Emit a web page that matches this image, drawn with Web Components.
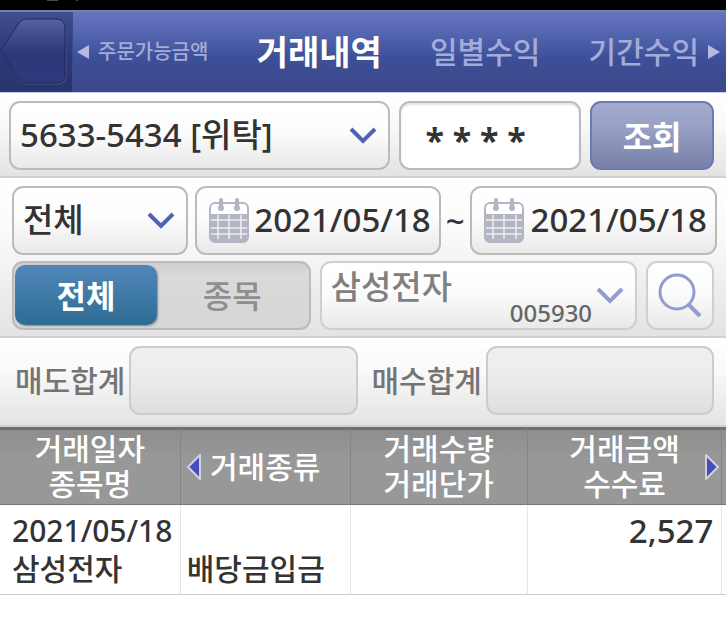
<!DOCTYPE html>
<html lang="ko">
<head>
<meta charset="utf-8">
<meta name="viewport" content="width=device-width, initial-scale=1">
<title>거래내역</title>
<style>
  body {
    margin: 0;
    background: #ffffff;
    color: #333333;
    font-family: "Noto Sans", "Noto Sans CJK KR", sans-serif;
    font-weight: 500;
  }
</style>
</head>
<body>
<ht-app></ht-app>

<script>
  // Shared by every control that sits in a rounded box
  const BOX = /* css */ `
    * {
      box-sizing: border-box;
    }

    .box {
      background: linear-gradient( #ffffff 0%, #fcfcfc 45%, #e9e9e9 100% );
      border: 2px solid #bbbbbb;
      border-radius: 11px;
      color: inherit;
      font: inherit;
      height: 69px;
      margin: 0;
      outline: none;
      width: 100%;
    }
  `;

  class HTElement extends HTMLElement {
    constructor() {
      super();

      const template = document.createElement( 'template' );
      template.innerHTML = this.constructor.markup;

      this.attachShadow( {mode: 'open'} );
      this.shadowRoot.appendChild( template.content.cloneNode( true ) );
    }
  }

  // Title bar with back button and tabs
  class HTHeader extends HTElement {
    static markup = /* template */ `
      <style>
        :host {
          background: linear-gradient( #6674bd 0%, #5263ae 30%, #3d4f98 58%, #3c4889 100% );
          border-bottom: 1px solid #c5cbe8;
          border-top: 2px solid #7680aa;
          box-sizing: border-box;
          display: flex;
          height: 83px;
        }

        button {
          background: none;
          border: 0;
          margin: 0;
          padding: 0;
        }

        .back {
          background: linear-gradient( #414f90 0%, #2c3976 55%, #29346d 100% );
          border-right: 1px solid #3d4988;
          flex: none;
          height: 80px;
          width: 73px;
        }

        svg {
          display: block;
        }

        nav {
          align-items: center;
          display: flex;
          flex: 1;
          gap: 8px;
          padding: 0 6px 0 4px;
        }

        .tabs {
          align-items: center;
          display: flex;
          flex: 1;
          justify-content: space-between;
        }

        a {
          color: #a3acd8;
          font-size: 30px;
          line-height: 40px;
          text-decoration: none;
          white-space: nowrap;
        }

        a.long {
          font-size: 20px;
        }

        a[aria-current] {
          color: #ffffff;
          font-size: 34px;
          font-weight: 700;
        }
      </style>
      <button class="back" type="button" aria-label="뒤로">
        <svg width="72" height="80" viewBox="0 0 72 80">
          <defs>
            <linearGradient id="face" x1="0" y1="0" x2="0" y2="1">
              <stop offset="0" stop-color="#5563a2"/>
              <stop offset=".25" stop-color="#3f4d8e"/>
              <stop offset=".55" stop-color="#2b3878"/>
              <stop offset="1" stop-color="#2d3a7d"/>
            </linearGradient>
          </defs>
          <path d="M2 39 L20 11 Q23 8 27 8 H57 Q66 8 66 17 V63 Q66 72 57 72 H27 Q23 72 20 69 Z" fill="none" stroke="#465390"/>
          <path d="M1 38 L19 11 Q22 7 26 7 H56 Q65 7 65 16 V62 Q65 71 56 71 H26 Q22 71 19 67 Z" fill="url(#face)" stroke="#1f2a58"/>
        </svg>
      </button>
      <nav>
        <svg width="13" height="14" viewBox="0 0 13 14"><path d="M0 7 L12 0 V14 Z" fill="#b4bbdf"/></svg>
        <div class="tabs">
          <a class="long" href="#order">주문가능금액</a>
          <a href="#history" aria-current="page">거래내역</a>
          <a href="#daily">일별수익</a>
          <a href="#period">기간수익</a>
        </div>
        <svg width="13" height="14" viewBox="0 0 13 14"><path d="M13 7 L1 0 V14 Z" fill="#b4bbdf"/></svg>
      </nav>
    `;
  }

  // Shaded band that holds controls
  class HTPanel extends HTElement {
    static markup = /* template */ `
      <style>
        :host {
          background: linear-gradient( #ffffff 0%, #fafafa 35%, #e3e3e3 100% );
          border-bottom: 2px solid #d2d2d2;
          box-sizing: border-box;
          display: grid;
          gap: 6px;
          padding: 8px 12px 6px;
        }
      </style>
      <slot></slot>
    `;
  }

  // Drop-down, with an optional code under the name
  class HTSelect extends HTElement {
    static markup = /* template */ `
      <style>
        ${BOX}

        :host {
          display: grid;
          min-width: 0;
        }

        .box, svg, span {
          grid-area: 1 / 1;
        }

        .box {
          appearance: none;
          font-size: 33px;
          padding: 0 48px 2px 9px;
        }

        svg {
          align-self: center;
          justify-self: end;
          margin-right: 13px;
          pointer-events: none;
        }

        path {
          fill: none;
          stroke: #5062b3;
          stroke-width: 4;
        }

        span {
          align-self: end;
          color: #666666;
          font-size: 24px;
          justify-self: end;
          line-height: 32px;
          margin: 0 45px 1px 0;
          pointer-events: none;
        }

        :host( [code] ) .box {
          border-color: #cfcfcf;
          color: #808080;
          padding-bottom: 18px;
        }

        :host( [code] ) path {
          stroke: #929ccd;
        }
      </style>
      <select class="box"><option></option></select>
      <svg width="28" height="18" viewBox="0 0 28 18"><path d="M2 2 L14 14 L26 2"/></svg>
      <span></span>
    `;

    // Setup
    connectedCallback() {
      this.$select = this.shadowRoot.querySelector( 'select' );
      this.$select.setAttribute( 'aria-label', this.getAttribute( 'label' ) );
      this.$select.options[0].text = this.getAttribute( 'value' );
      this.shadowRoot.querySelector( 'span' ).textContent = this.getAttribute( 'code' ) || '';
    }
  }

  // Account password
  class HTPassword extends HTElement {
    static markup = /* template */ `
      <style>
        ${BOX}

        :host {
          display: block;
          min-width: 0;
        }

        .box {
          background: #ffffff;
          box-shadow: inset 0 2px 2px #e4e4e4;
          font-size: 34px;
          font-weight: 700;
          padding: 8px 24px 0 24px;
        }
      </style>
      <input class="box" type="text" aria-label="비밀번호" autocomplete="off" value="* * * *">
    `;
  }

  class HTButton extends HTElement {
    static markup = /* template */ `
      <style>
        ${BOX}

        :host {
          display: block;
          min-width: 0;
        }

        .box {
          background: linear-gradient( #a3abd0 0%, #979fc6 40%, #7780a7 100% );
          border-color: #6d79b0;
          color: #ffffff;
          font-size: 32px;
          font-weight: 700;
          padding: 0 0 2px;
        }
      </style>
      <button class="box" type="button"><slot></slot></button>
    `;
  }

  // Date with calendar icon
  class HTDate extends HTElement {
    static markup = /* template */ `
      <style>
        ${BOX}

        :host {
          display: block;
          min-width: 0;
        }

        .box {
          align-items: center;
          display: flex;
          font-size: 33px;
          justify-content: space-between;
          padding: 0 8px 2px 12px;
        }

        svg {
          flex: none;
        }
      </style>
      <button class="box" type="button">
        <svg width="40" height="46" viewBox="0 0 40 46">
          <rect x="1" y="6" width="38" height="39" rx="5" fill="#ffffff" stroke="#b3b5c3" stroke-width="2"/>
          <path d="M1 17 H39 V40 Q39 45 34 45 H6 Q1 45 1 40 Z" fill="#b3b5c3"/>
          <path d="M2 23 H38 M2 31 H38 M2 37 H38 M9 18 V42 M20 18 V42 M32 18 V42" stroke="#eeeef2" stroke-width="1.5"/>
          <path d="M12 3 V10 M28 3 V10" stroke="#b3b5c3" stroke-width="4" stroke-linecap="round"/>
          <circle cx="12" cy="11" r="3" fill="#b3b5c3"/>
          <circle cx="28" cy="11" r="3" fill="#b3b5c3"/>
        </svg>
        <slot></slot>
      </button>
    `;
  }

  // All or single item
  class HTToggle extends HTElement {
    static markup = /* template */ `
      <style>
        ${BOX}

        :host {
          display: block;
          min-width: 0;
        }

        .box {
          background: linear-gradient( #cfcfcf 0%, #dadada 20%, #d6d6d6 100% );
          display: grid;
          grid-template-columns: 48fr 51fr;
          padding: 2px 1px 3px;
        }

        input {
          appearance: none;
          margin: 0;
          position: absolute;
        }

        label {
          border-radius: 10px;
          color: #8e8e8e;
          display: grid;
          font-size: 32px;
          padding-bottom: 2px;
          place-items: center;
        }

        label:has( :checked ) {
          background: linear-gradient( #5086b7 0%, #417ba9 45%, #306b92 100% );
          box-shadow: 1px 1px 2px #888888;
          color: #ffffff;
          font-weight: 700;
        }
      </style>
      <div class="box" role="radiogroup" aria-label="조회 구분">
        <label><input type="radio" name="scope" checked>전체</label>
        <label><input type="radio" name="scope">종목</label>
      </div>
    `;
  }

  class HTSearch extends HTElement {
    static markup = /* template */ `
      <style>
        ${BOX}

        :host {
          display: block;
          min-width: 0;
        }

        .box {
          border-color: #cfcfcf;
          display: grid;
          padding: 0;
          place-items: center;
        }
      </style>
      <button class="box" type="button" aria-label="종목 검색">
        <svg width="44" height="46" viewBox="0 0 44 46" fill="none" stroke="#929ccd">
          <circle cx="19" cy="19" r="17" stroke-width="3"/>
          <path d="M30 31 L42 43" stroke-width="4"/>
        </svg>
      </button>
    `;
  }

  // Label and read-only total
  class HTTotal extends HTElement {
    static markup = /* template */ `
      <style>
        ${BOX}

        :host {
          align-items: center;
          display: flex;
          gap: 4px;
          min-width: 0;
        }

        label {
          color: #747474;
          flex: none;
          font-size: 30px;
          padding-bottom: 3px;
        }

        .box {
          background: linear-gradient( #f0f0f0 0%, #ebebeb 50%, #dedede 100% );
          border-color: #cccccc;
          flex: 1;
          min-width: 0;
          padding: 0 10px;
        }
      </style>
      <label for="total"><slot></slot></label>
      <input class="box" id="total" type="text" readonly>
    `;
  }

  // Transactions
  class HTTable extends HTElement {
    static markup = /* template */ `
      <style>
        :host {
          display: block;
        }

        table {
          border-collapse: separate;
          border-spacing: 0;
          font-size: 30px;
          table-layout: fixed;
          width: 100%;
        }

        th, td {
          box-sizing: border-box;
          padding: 0;
          white-space: nowrap;
        }

        th {
          background: linear-gradient( #8e8e8e, #989898 40% );
          border-bottom: 1px solid #777777;
          border-right: 1px solid #858585;
          border-top: 3px solid #707070;
          color: #ffffff;
          font-weight: 500;
          height: 78px;
          line-height: 35px;
          padding-bottom: 2px;
          position: relative;
        }

        th svg {
          position: absolute;
          top: 23px;
        }

        .previous {
          left: 5px;
        }

        .next {
          right: 1px;
        }

        td {
          border-bottom: 1px solid #cccccc;
          border-right: 1px solid #e6e6e6;
          height: 90px;
          line-height: 38px;
          padding: 7px 8px 6px 6px;
          vertical-align: bottom;
        }

        td:first-child {
          padding-left: 12px;
        }

        .amount {
          font-size: 33px;
          text-align: right;
          vertical-align: top;
        }

        .rest {
          border-right: 0;
          padding: 0;
        }
      </style>
      <table>
        <colgroup>
          <col style="width: 24.9%">
          <col style="width: 23.4%">
          <col style="width: 24.4%">
          <col style="width: 26.8%">
          <col>
        </colgroup>
        <thead>
          <tr>
            <th>거래일자<br>종목명</th>
            <th>
              <svg class="previous" width="17" height="28" viewBox="0 0 17 28"><path d="M2 14 L14 2 V26 Z" fill="#444fbd" stroke="#d2d2dc" stroke-width="2" stroke-linejoin="round"/></svg>
              거래종류
            </th>
            <th>거래수량<br>거래단가</th>
            <th>
              거래금액<br>수수료
              <svg class="next" width="17" height="28" viewBox="0 0 17 28"><path d="M15 14 L3 2 V26 Z" fill="#444fbd" stroke="#d2d2dc" stroke-width="2" stroke-linejoin="round"/></svg>
            </th>
            <th class="rest"></th>
          </tr>
        </thead>
        <tbody>
          <tr>
            <td>2021/05/18<br>삼성전자</td>
            <td>배당금입금</td>
            <td></td>
            <td class="amount">2,527</td>
            <td class="rest"></td>
          </tr>
        </tbody>
      </table>
    `;
  }

  class HTApp extends HTElement {
    static markup = /* template */ `
      <style>
        :host {
          display: block;
        }

        .status {
          background: #000000;
          height: 10px;
        }

        .status svg {
          display: block;
        }

        .row {
          align-items: center;
          display: grid;
        }

        .account {
          gap: 9px;
          grid-template-columns: 382fr 182fr 124fr;
        }

        ht-panel:has( .account ) {
          padding-left: 9px;
        }

        .dates {
          grid-template-columns: 177fr 7px 246fr 29px 248fr;
          margin-right: -3px;
        }

        .dates span {
          font-size: 33px;
          line-height: 40px;
          text-align: center;
        }

        .dates ht-date:first-of-type {
          grid-column: 3;
        }

        .item {
          gap: 9px;
          grid-template-columns: 299fr 318fr 68fr;
        }

        .totals {
          gap: 14px;
          grid-template-columns: 1fr 1fr;
          padding: 0 0 4px 3px;
        }
      </style>
      <div class="status">
        <svg width="80" height="2" viewBox="0 0 80 2"><path d="M47 0 H58 V1 H47 Z M76 0 H78 V1 H76 Z" fill="#4a4a4a"/></svg>
      </div>
      <ht-header></ht-header>
      <ht-panel>
        <div class="row account">
          <ht-select label="계좌" value="5633-5434 [위탁]"></ht-select>
          <ht-password></ht-password>
          <ht-button>조회</ht-button>
        </div>
      </ht-panel>
      <ht-panel>
        <div class="row dates">
          <ht-select label="거래 구분" value="전체"></ht-select>
          <ht-date>2021/05/18</ht-date>
          <span>~</span>
          <ht-date>2021/05/18</ht-date>
        </div>
        <div class="row item">
          <ht-toggle></ht-toggle>
          <ht-select label="종목" value="삼성전자" code="005930"></ht-select>
          <ht-search></ht-search>
        </div>
      </ht-panel>
      <ht-panel>
        <div class="row totals">
          <ht-total>매도합계</ht-total>
          <ht-total>매수합계</ht-total>
        </div>
      </ht-panel>
      <ht-table></ht-table>
    `;
  }

  window.customElements.define( 'ht-header', HTHeader );
  window.customElements.define( 'ht-panel', HTPanel );
  window.customElements.define( 'ht-select', HTSelect );
  window.customElements.define( 'ht-password', HTPassword );
  window.customElements.define( 'ht-button', HTButton );
  window.customElements.define( 'ht-date', HTDate );
  window.customElements.define( 'ht-toggle', HTToggle );
  window.customElements.define( 'ht-search', HTSearch );
  window.customElements.define( 'ht-total', HTTotal );
  window.customElements.define( 'ht-table', HTTable );
  window.customElements.define( 'ht-app', HTApp );
</script>
</body>
</html>
